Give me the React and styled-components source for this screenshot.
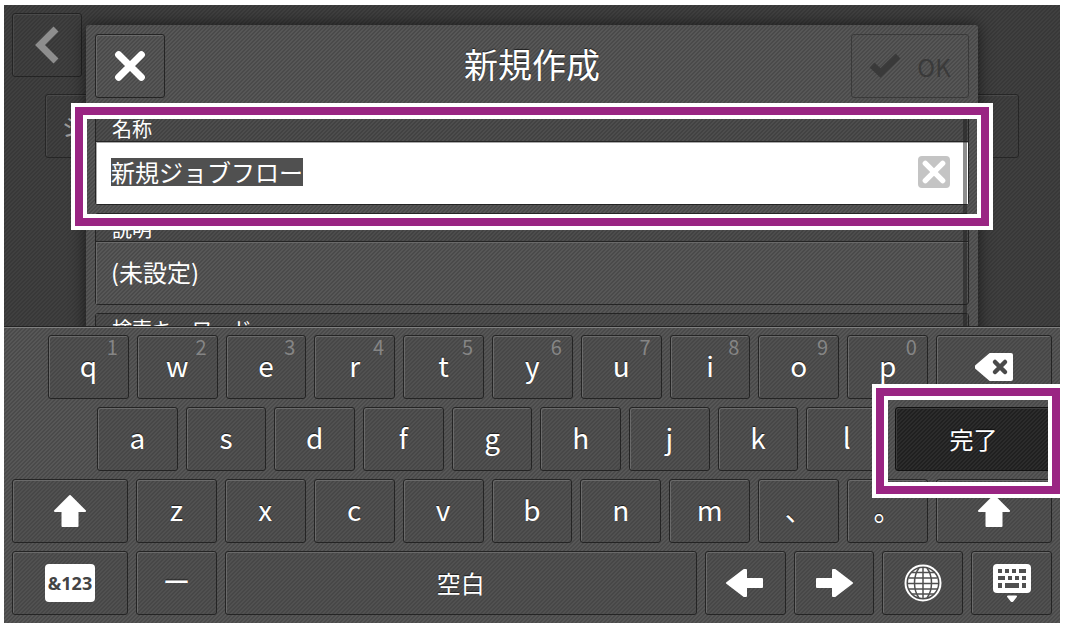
import React, { useEffect, useRef } from "react";
import styled, { createGlobalStyle, css } from "styled-components";

const weave = (a, b) => css`
  background-color: ${a};
  background-image: linear-gradient(
    135deg,
    ${a} 25%,
    ${b} 25%,
    ${b} 50%,
    ${a} 50%,
    ${a} 75%,
    ${b} 75%
  );
  background-size: 4px 4px;
`;

const Global = createGlobalStyle`
  * { box-sizing: border-box; }
  body {
    margin: 0;
    background: #fff;
    color: #fff;
    font-family: "Noto Sans CJK JP", "Liberation Sans", sans-serif;
  }
  button, input { font: inherit; color: inherit; }
`;

const Screen = styled.main`
  display: flex;
  flex-direction: column;
  height: 100vh;
  min-height: 480px;
  padding: 5px 5px 5px 4px;
`;

const Stage = styled.div`
  ${weave("#404040", "#383838")}
  position: relative;
  flex: 1;
  min-height: 0;
  overflow: hidden;
`;

const bevel = css`
  border: 1px solid #242424;
  border-radius: 3px;
  box-shadow: inset 1px 1px 0 #6a6a6a;
`;

const IconButton = styled.button`
  ${bevel}
  display: flex;
  align-items: center;
  justify-content: center;
  gap: 16px;
  width: ${(p) => (p.$wide ? "118px" : "70px")};
  height: 64px;
  padding: 0;
  background: transparent;
  color: ${(p) => (p.$dim ? "#3a3a3a" : "#fff")};
  font-size: 24px;
  ${(p) => p.$dim && "border-color: #3a3a3a; box-shadow: none;"}
`;

const Behind = styled.div`
  position: absolute;
  inset: 8px 8px auto;
`;

const BackButton = styled(IconButton)`
  color: #8e8e8e;
  box-shadow: inset 1px 1px 0 #4a4a4a;
`;

const BehindPanel = styled.div`
  margin: 17px 33px 0;
  height: 64px;
  padding: 0 16px;
  border: 1px solid #262626;
  border-radius: 3px;
  box-shadow: inset 1px 1px 0 #4a4a4a;
  color: #999;
  font-size: 24px;
  line-height: 62px;
`;

const Dialog = styled.section`
  ${weave("#575757", "#4a4a4a")}
  position: relative;
  margin: 20px 82px 0;
  padding: 9px;
  min-height: 400px;
  border-radius: 3px;
  box-shadow: 0 0 16px rgba(0, 0, 0, 0.6);
`;

const DialogHeader = styled.header`
  display: grid;
  grid-template-columns: 118px 1fr 118px;
  align-items: center;
  margin-bottom: 15px;
`;

const Title = styled.h1`
  margin: 0;
  padding-bottom: 4px;
  font-size: 34px;
  font-weight: 400;
  line-height: 60px;
  text-align: center;
  text-shadow: 0 -1px 1px rgba(0, 0, 0, 0.6);
`;

const Fields = styled.div`
  position: relative;
  display: flex;
  flex-direction: column;
  gap: 8px;
`;

const Field = styled.div`
  position: relative;
  border: 1px solid #242424;
  border-radius: 3px;
`;

const Label = styled.label`
  ${weave("#4d4d4d", "#424242")}
  display: block;
  height: 27px;
  padding: 0 16px;
  font-size: 20px;
  line-height: 30px;
`;

const Value = styled.div`
  display: flex;
  align-items: center;
  height: 63px;
  padding-bottom: 2px;
  border-top: 1px solid #242424;
  background: ${(p) => (p.$active ? "#fff" : "transparent")};
  box-shadow: inset 1px 1px 0 ${(p) => (p.$active ? "#aaa" : "#6a6a6a")};
`;

const TextInput = styled.input`
  flex: 1;
  min-width: 0;
  height: 28px;
  padding: 0 15px;
  border: 0;
  outline: 0;
  background: transparent;
  caret-color: transparent;
  font-size: 24px;
  line-height: 28px;
  &::selection { background: #505050; color: #fff; }
`;

const ClearButton = styled.button`
  display: flex;
  align-items: center;
  justify-content: center;
  width: 32px;
  height: 32px;
  margin-right: 18px;
  padding: 0;
  border: 0;
  border-radius: 4px;
  background: #c4c4c4;
  color: #fff;
`;

const ScrollThumb = styled.div`
  position: absolute;
  top: 0;
  bottom: 0;
  right: 2px;
  width: 4px;
  background: rgba(30, 30, 30, 0.5);
`;

const Callout = styled.span`
  position: absolute;
  z-index: 5;
  inset: ${(p) => p.$inset};
  border: 4px solid #fff;
  pointer-events: none;
  &::before {
    content: "";
    position: absolute;
    inset: 0;
    border: 8px solid #9a2583;
  }
  &::after {
    content: "";
    position: absolute;
    inset: 8px;
    border: 4px solid #fff;
  }
`;

const Keyboard = styled.div`
  ${weave("#575757", "#4a4a4a")}
  position: relative;
  display: flex;
  flex-direction: column;
  gap: 8px;
  padding: 8px;
  box-shadow: inset 0 1px 0 #808080, 0 -1px 0 #222;
`;

const Row = styled.div`
  display: flex;
  gap: 8px;
  padding-left: ${(p) => p.$indent || 0}px;
`;

const Key = styled.button`
  ${bevel}
  position: relative;
  display: flex;
  align-items: center;
  justify-content: center;
  flex: ${(p) => p.$flex || "1 1 0"};
  min-width: 0;
  height: 64px;
  padding: 0;
  background: rgba(60, 60, 60, 0.2);
  font-size: 24px;
  line-height: 32px;
  text-shadow: 0 -1px 1px rgba(0, 0, 0, 0.6);
`;

const LetterKey = styled(Key)`
  padding-bottom: 4px;
  font-size: 28px;
`;

const DoneKey = styled(Key)`
  ${weave("#2c2c2c", "#202020")}
  border-color: #111;
  box-shadow: inset 1px 1px 0 #3c3c3c;
`;

const Hint = styled.span`
  position: absolute;
  top: 1px;
  right: 10px;
  color: #858585;
  font-size: 20px;
  line-height: 20px;
  text-shadow: none;
`;

const Badge = styled.span`
  width: 50px;
  height: 38px;
  border-radius: 4px;
  background: #fff;
  color: #444;
  font-family: "Open Sans", sans-serif;
  font-size: 18px;
  font-weight: 700;
  line-height: 38px;
  text-shadow: none;
`;

const Cross = ({ size, w = 4 }) => (
  <svg width={size} height={size} viewBox="0 0 24 24" fill="none" stroke="currentColor" strokeWidth={w} strokeLinecap="round" aria-hidden="true">
    <path d="M4 4 20 20M20 4 4 20" />
  </svg>
);

const Chevron = () => (
  <svg width="24" height="38" viewBox="0 0 24 38" fill="none" stroke="currentColor" strokeWidth="7" strokeLinejoin="miter" aria-hidden="true">
    <path d="M21 3 5 19 21 35" />
  </svg>
);

const Check = () => (
  <svg width="32" height="28" viewBox="0 0 32 28" fill="none" stroke="currentColor" strokeWidth="7" aria-hidden="true">
    <path d="M3 13 11.500 21 29 4" />
  </svg>
);

const UpArrow = () => (
  <svg width="34" height="34" viewBox="0 0 34 34" fill="currentColor" stroke="currentColor" strokeWidth="2" strokeLinejoin="round" aria-hidden="true">
    <path d="M17 2 32 17H24.500V32H9.500V17H2Z" />
  </svg>
);

const SideArrow = ({ right }) => (
  <svg width="38" height="30" viewBox="0 0 38 30" fill="currentColor" stroke="currentColor" strokeWidth="2" strokeLinejoin="round" aria-hidden="true">
    <path d={right ? "M37 15 20 28 18 28V19H2V11H18V2H20Z" : "M1 15 18 28 20 28V19H36V11H20V2H18Z"} />
  </svg>
);

const Backspace = () => (
  <svg width="38" height="28" viewBox="0 0 38 28" aria-hidden="true">
    <path d="M15 1H36Q37 1 37 2V26Q37 27 36 27H15L1 15V13Z" fill="#fff" stroke="#fff" strokeWidth="2" strokeLinejoin="round" />
    <path d="M20 9 30 19M30 9 20 19" stroke="#4a4a4a" strokeWidth="4.500" strokeLinecap="round" />
  </svg>
);

const Globe = () => (
  <svg width="38" height="38" viewBox="0 0 38 38" fill="none" aria-hidden="true">
    <circle cx="19" cy="19" r="17.500" stroke="#fff" strokeWidth="2" />
    <circle cx="19" cy="19" r="15" fill="#fff" />
    <path d="M19 4V34M5 14H33M4 19.500H34M5 25H33M8 8.500H30M8 30H30M15 4C9 12 9 26 15 34M23 4C29 12 29 26 23 34" stroke="#505050" strokeWidth="1.500" />
  </svg>
);

const KeyboardIcon = () => (
  <svg width="38" height="38" viewBox="0 0 38 38" aria-hidden="true">
    <rect x="0" y="0" width="38" height="29" rx="4" fill="#fff" />
    <path d="M5 5h4v4H5zM12 5h4v4h-4zM19 5h4v4h-4zM26 5h7v4h-7zM5 12h7v4H5zM15 12h4v4h-4zM22 12h4v4h-4zM29 12h4v4h-4zM5 19h4v5H5zM12 19h14v5H12zM29 19h4v5h-4z" fill="#505050" />
    <path d="M15 32.500H23L19.500 37H18.500Z" fill="#fff" stroke="#fff" strokeWidth="2" strokeLinejoin="round" />
  </svg>
);

const topRow = ["q", "w", "e", "r", "t", "y", "u", "i", "o", "p"];
const homeRow = ["a", "s", "d", "f", "g", "h", "j", "k", "l"];
const bottomRow = ["z", "x", "c", "v", "b", "n", "m", "、", "。"];

export default function App() {
  const nameRef = useRef(null);

  useEffect(() => {
    nameRef.current.focus();
    nameRef.current.select();
  }, []);

  return (
    <Screen>
      <Global />
      <Stage>
        <Behind>
          <BackButton aria-label="戻る"><Chevron /></BackButton>
          <BehindPanel>ジ</BehindPanel>
        </Behind>
        <Dialog>
          <DialogHeader>
            <IconButton aria-label="閉じる"><Cross size={34} w={5} /></IconButton>
            <Title>新規作成</Title>
            <IconButton $wide $dim disabled><Check />OK</IconButton>
          </DialogHeader>
          <Fields>
            <Field>
              <Label htmlFor="name">名称</Label>
              <Value $active>
                <TextInput id="name" ref={nameRef} defaultValue="新規ジョブフロー" />
                <ClearButton aria-label="消去"><Cross size={26} w={5} /></ClearButton>
              </Value>
              <Callout $inset="-11px -25px -26px -25px" />
            </Field>
            <Field>
              <Label htmlFor="description">説明</Label>
              <Value>
                <TextInput id="description" defaultValue="(未設定)" />
              </Value>
            </Field>
            <Field>
              <Label as="div">検索キーワード</Label>
            </Field>
            <ScrollThumb />
          </Fields>
        </Dialog>
      </Stage>
      <Keyboard>
        <Row $indent={36}>
          {topRow.map((k, i) => (
            <LetterKey key={k}>{k}<Hint>{(i + 1) % 10}</Hint></LetterKey>
          ))}
          <Key $flex="0 0 116px" aria-label="後退"><Backspace /></Key>
        </Row>
        <Row $indent={85}>
          {homeRow.map((k) => <LetterKey key={k}>{k}</LetterKey>)}
          <DoneKey $flex="0 0 157px">
            完了
            <Callout $inset="-24px -13px -28px -24px" />
          </DoneKey>
        </Row>
        <Row>
          <Key $flex="0 0 116px" aria-label="シフト"><UpArrow /></Key>
          {bottomRow.map((k) => <LetterKey key={k}>{k}</LetterKey>)}
          <Key $flex="0 0 116px" aria-label="シフト"><UpArrow /></Key>
        </Row>
        <Row>
          <Key $flex="0 0 116px"><Badge>&amp;123</Badge></Key>
          <LetterKey>ー</LetterKey>
          <Key $flex="5 1 78px">空白</Key>
          <Key aria-label="左"><SideArrow /></Key>
          <Key aria-label="右"><SideArrow right /></Key>
          <Key aria-label="言語"><Globe /></Key>
          <Key aria-label="キーボードを閉じる"><KeyboardIcon /></Key>
        </Row>
      </Keyboard>
    </Screen>
  );
}
